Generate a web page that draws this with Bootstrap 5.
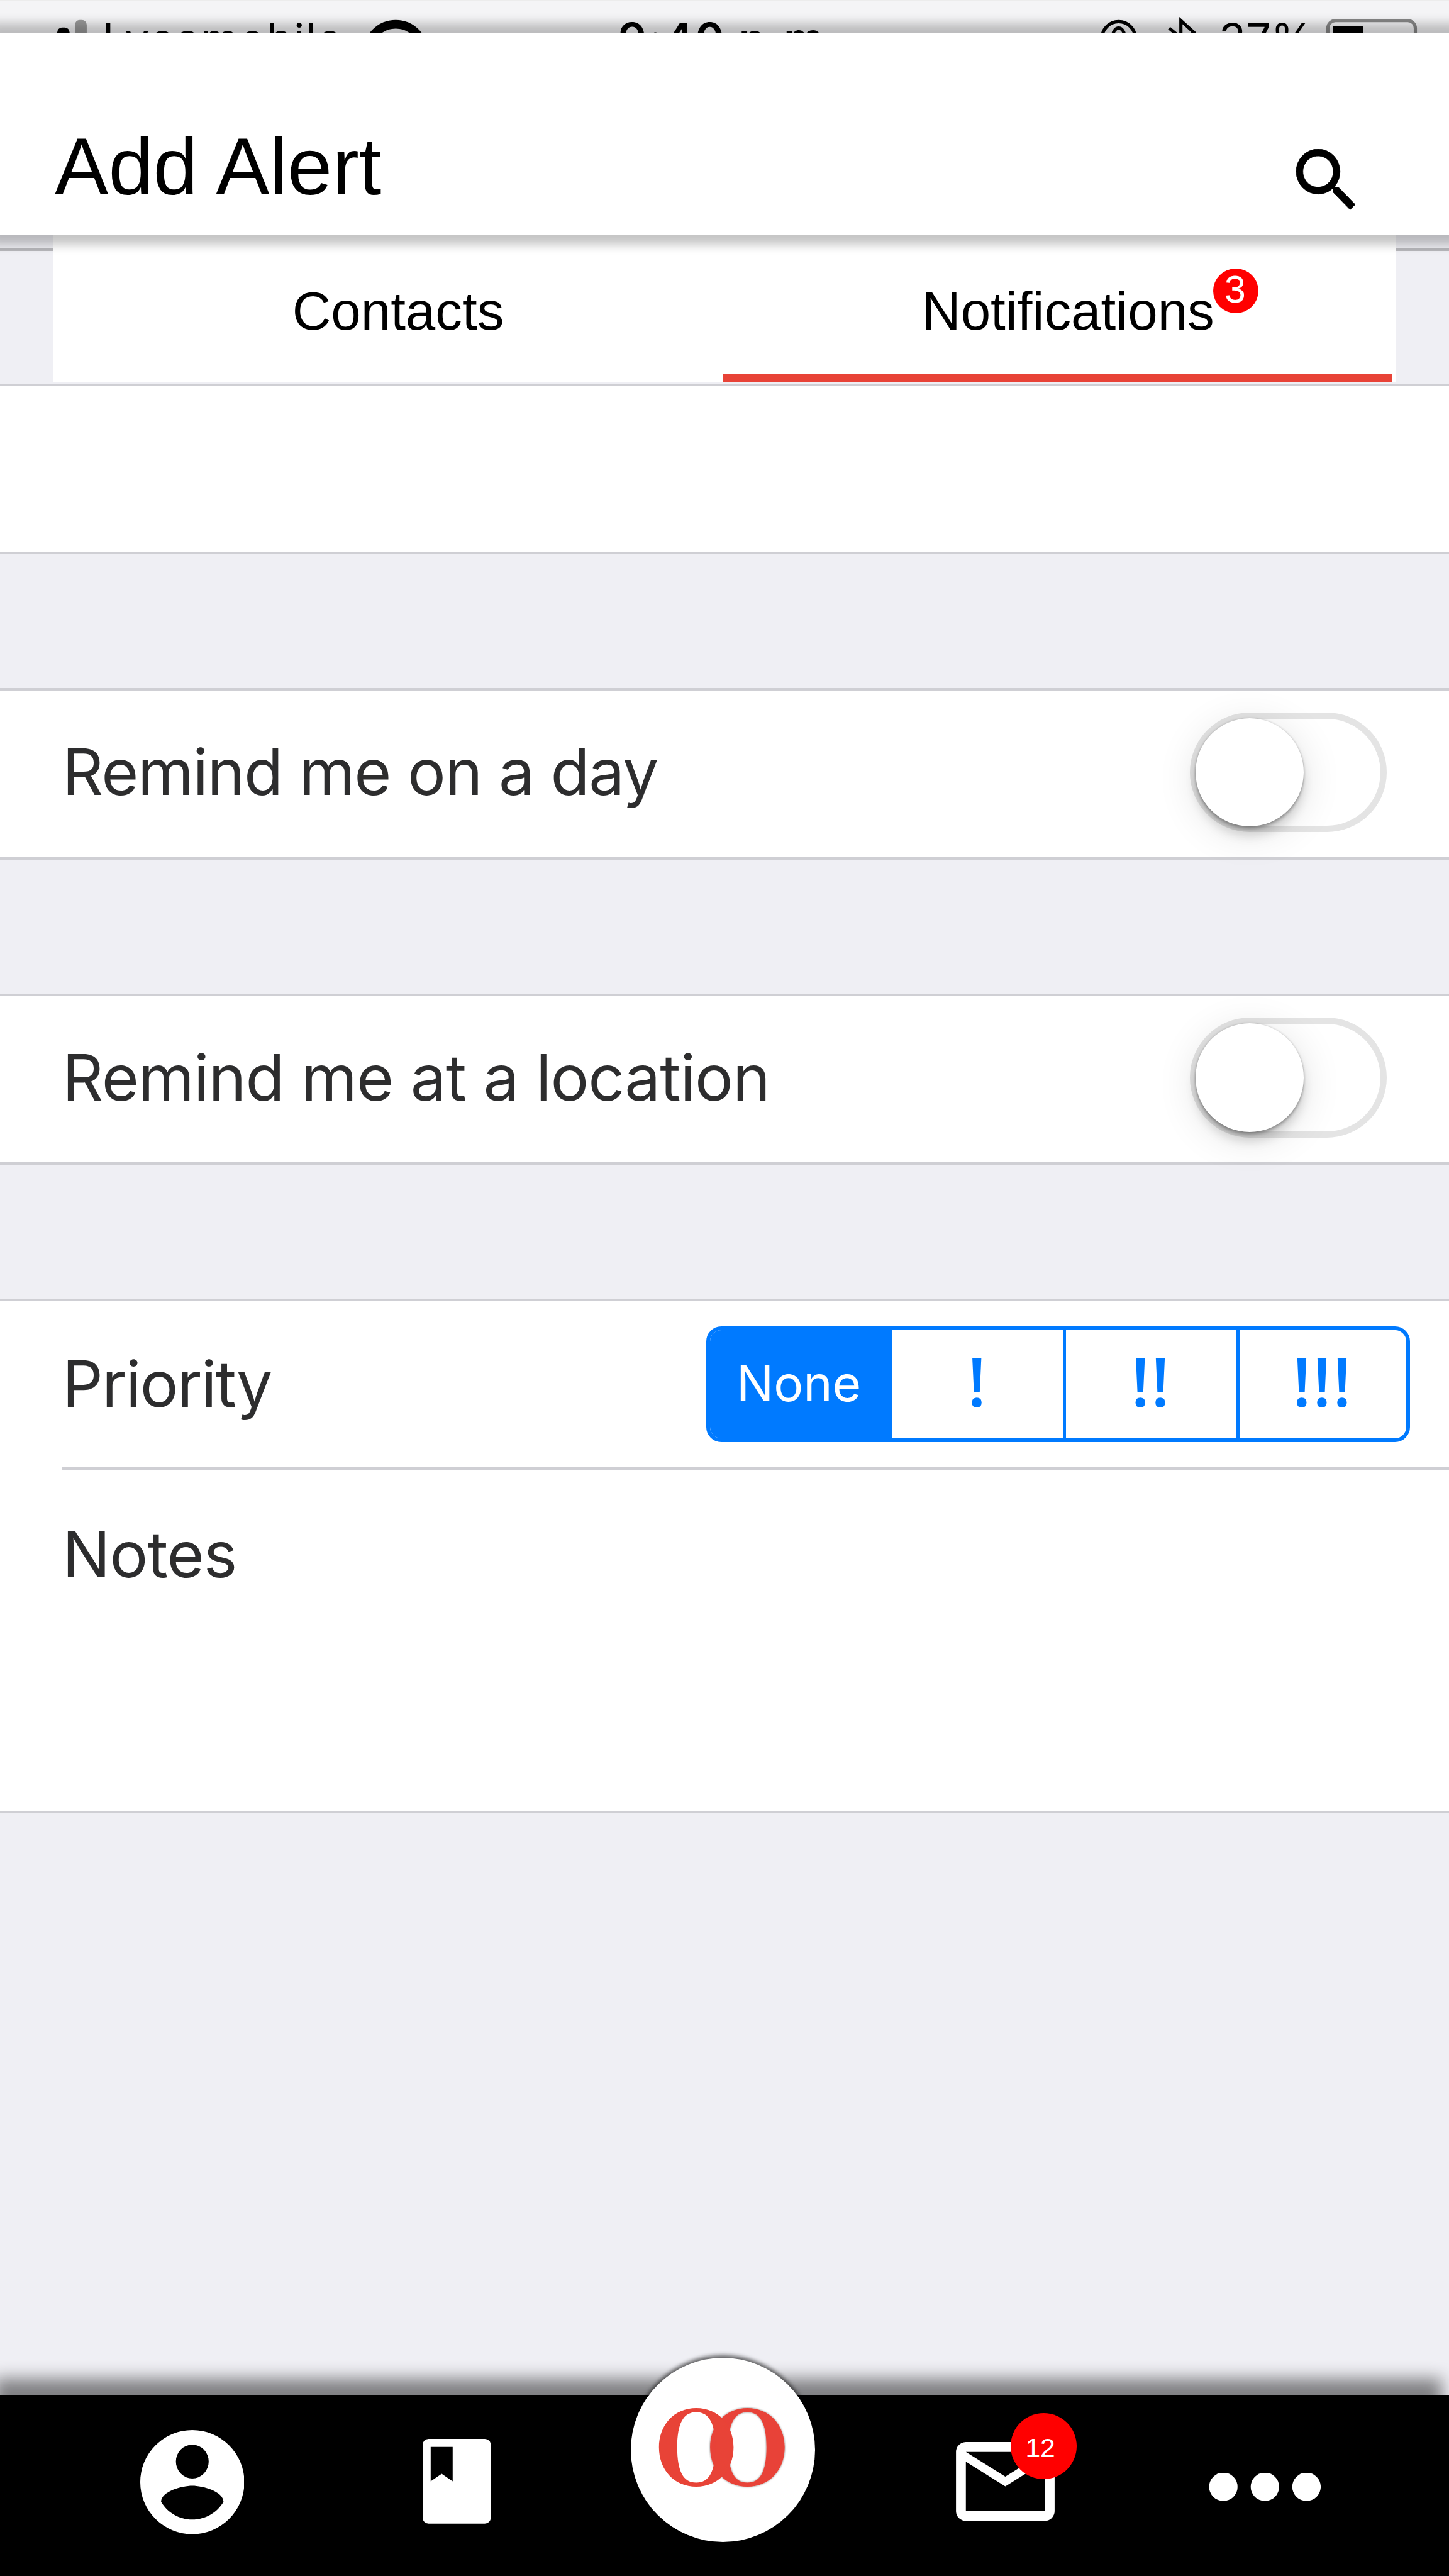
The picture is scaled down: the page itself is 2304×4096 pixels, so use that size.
<!DOCTYPE html>
<html lang="en">
<head>
<meta charset="utf-8">
<meta name="viewport" content="width=device-width, initial-scale=1">
<title>Add Alert</title>
<link href="https://cdn.jsdelivr.net/npm/bootstrap@5.3.0/dist/css/bootstrap.min.css" rel="stylesheet">
<style>
  /* 27rem spans the full width of the screen */
  html { font-size: 85.3333px; }
  body { background: #efeff4; font-family: "Liberation Sans", Arial, sans-serif; color: #000; line-height: 1; overflow: hidden; }
  svg { display: block; flex: none; }
  .screen { height: 48rem; width: 27rem; overflow: hidden; }

  .statusbar { height: .61rem; background: #f4f4f6; border-top: .03rem solid #ececec; font-family: Inter, sans-serif; flex: none; }
  .statusbar-row { height: 1.42rem; padding: 0 .55rem 0 1.07rem; }
  .ico-signal { width: .55rem; height: 1.42rem; }
  .ico-wifi { width: 1.2rem; height: 1.42rem; margin-left: -.13rem; }
  .ico-lock { width: 1.9rem; height: 1.42rem; margin-right: .33rem; }
  .ico-battery { width: 1.75rem; height: 1.42rem; margin-left: .29rem; }
  .carrier { font-size: .8rem; letter-spacing: .022rem; margin-left: .29rem; margin-right: .39rem; width: 4.6rem; white-space: nowrap; }
  .clock { font-size: .83rem; font-weight: 600; letter-spacing: .028rem; margin-left: 3.55rem; width: 3.9rem; white-space: nowrap; }
  .charge { font-size: .82rem; width: 1.7rem; white-space: nowrap; }

  .topbar { height: 3.76rem; padding: 1.74rem 1.75rem 0 1.02rem; z-index: 3; box-shadow: 0 .01rem .18rem .19rem rgba(0,0,0,.235); flex: none; }
  .topbar h1 { font-size: 1.5rem; line-height: 1; }
  .search-ico { width: 1.1rem; height: 1.13rem; margin-top: .43rem; }

  .tabstrip { height: 2.775rem; flex: none; }
  .tab-gutter { height: .305rem; width: 1rem; border-bottom: .055rem solid #b8b8bc; background: #efeff4; }
  .tabs-panel { height: 2.74rem; width: 25rem; }
  .tab-item { font-size: 1rem; padding-top: .925rem; width: 12.475rem; color: #000; text-decoration: none; border-bottom: .15rem solid transparent; }
  .tab-item.first { padding-left: 4.445rem; }
  .tab-item.second { padding-left: 3.705rem; width: 12.465rem; border-bottom-color: #e84337; }
  .count { background: #f00; color: #fff; border-radius: 50%; }
  .count-tab { width: .84rem; height: .84rem; font-size: .71rem; left: 5.43rem; top: -.235rem; padding-right: .03rem; padding-bottom: .05rem; }
  .count-mail { width: 1.23rem; height: 1.23rem; font-size: .5rem; left: 1.02rem; top: -.53rem; padding-right: .12rem; padding-top: .05rem; }

  .sheet { background: #fff; border-top: .055rem solid #cfcfd4; border-bottom: .055rem solid #cfcfd4; flex: none; font-family: Inter, sans-serif; font-size: 1.19rem; color: #2d2d2e; }
  .sheet.blank { height: 3.18rem; }
  .sheet.line { height: 3.19rem; margin-top: 2.5rem; padding: 0 1.165rem .06rem 1.16rem; }
  .sheet.details { height: 9.585rem; margin-top: 2.5rem; }
  .prio-row { height: 3.13rem; margin-left: 1.15rem; padding-right: .73rem; border-bottom: .055rem solid #cfcfd4; }
  .prio-label { margin-left: .01rem; letter-spacing: -.021rem; }
  .notes-row { padding: .99rem 0 0 1.16rem; letter-spacing: -.012rem; }
  .day-label { letter-spacing: -.0175rem; }
  .place-label { letter-spacing: -.012rem; }

  .toggle { width: 3.665rem; height: 2.23rem; border-radius: 2rem; border: .12rem solid #e4e4e4; background: #fff; }
  .knob { display: block; width: 2.02rem; height: 2.02rem; border-radius: 50%; background: #fff; margin-left: -.01rem; margin-top: -.01rem;
    box-shadow: 0 0 .04rem rgba(0,0,0,.22), 0 .05rem .05rem rgba(0,0,0,.22), 0 .17rem .2rem -.01rem rgba(0,0,0,.16), 0 .12rem .75rem rgba(0,0,0,.12); }

  .segmented { width: 13.11rem; height: 2.16rem; border: .08rem solid #007aff; border-radius: .28rem; color: #007aff; overflow: hidden; background: #fff; }
  .segmented > div { flex: none; }
  .segmented > .none { width: 3.4rem; background: #007aff; color: #fff; font-size: .92rem; padding-right: .09rem; padding-bottom: .01rem; }
  .segmented > .bang { width: 3.17rem; font-family: "Open Sans", sans-serif; font-weight: 600; font-size: 1.25rem; letter-spacing: .03rem; padding-bottom: .1rem; }
  .segmented > .split { width: 3.24rem; border-left: .07rem solid #007aff; }
  .segmented > .split:last-child { width: 3.155rem; }

  .bottombar { height: 3.38rem; background: #000; box-shadow: -.12rem -.31rem .29rem rgba(0,0,0,.47); padding-left: 2.61rem; flex: none; }
  .ico-user { width: 1.94rem; height: 1.94rem; margin-top: .66rem; }
  .ico-book { width: 1.27rem; height: 1.58rem; margin: .83rem 0 0 3.32rem; }
  .brand-btn { width: 3.44rem; height: 3.44rem; border-radius: 50%; background: #fff; margin: -.69rem 0 0 2.61rem; box-shadow: 0 -.05rem .08rem rgba(0,0,0,.6); flex: none; }
  .ico-brand { width: 3.44rem; height: 3.44rem; }
  .mail-wrap { margin: .88rem 0 0 2.62rem; width: 1.84rem; height: 1.47rem; }
  .ico-mail { width: 1.84rem; height: 1.47rem; }
  .ico-dots { width: 2.07rem; height: .52rem; margin: 1.46rem 0 0 2.89rem; }
</style>
</head>
<body>
<div class="screen d-flex flex-column">

  <div class="statusbar overflow-hidden">
    <div class="statusbar-row d-flex align-items-center">
      <svg class="ico-signal" viewBox="0 0 55 142">
        <rect x="0" y="49" width="23" height="60" rx="9"/><rect x="33" y="35" width="22" height="74" rx="9" fill="#9a9a9a"/>
      </svg>
      <span class="carrier">Lycamobile</span>
      <svg class="ico-wifi" viewBox="0 0 120 142">
        <circle cx="60" cy="96" r="53" fill="none" stroke="#000" stroke-width="16"/>
      </svg>
      <span class="clock">9:40 p.m.</span>
      <svg class="ico-lock ms-auto" viewBox="0 0 190 142">
        <g fill="none" stroke="#000" stroke-width="6"><circle cx="36" cy="69" r="31"/><path d="M25 66a11 16 0 0 1 22 0M130 50l46 38-24 18V36l24 22-46 38"/></g>
      </svg>
      <span class="charge">37%</span>
      <svg class="ico-battery" viewBox="0 0 175 142">
        <rect x="4" y="36" width="163" height="72" rx="14" fill="none" stroke="#888" stroke-width="6"/><rect x="13" y="46" width="57" height="54" rx="4"/>
      </svg>
    </div>
  </div>

  <header class="topbar bg-white position-relative d-flex align-items-start justify-content-between">
    <h1 class="m-0 fw-normal">Add Alert</h1>
    <svg class="search-ico" viewBox="3 3 17.5 17.5" preserveAspectRatio="none"><path d="M15.5 14h-.79l-.28-.27A6.47 6.47 0 0 0 16 9.5 6.5 6.5 0 1 0 9.5 16c1.61 0 3.09-.59 4.23-1.57l.27.28v.79l5 4.99L20.49 19l-4.99-5zm-6 0C7.01 14 5 11.99 5 9.5S7.01 5 9.5 5 14 7.01 14 9.5 11.99 14 9.5 14z" stroke="#000" stroke-width=".15"/></svg>
  </header>

  <nav class="tabstrip d-flex">
    <div class="tab-gutter"></div>
    <div class="tabs-panel bg-white d-flex">
      <a class="tab-item first">Contacts</a>
      <a class="tab-item second"><span class="position-relative">Notifications<span class="count count-tab position-absolute d-flex align-items-center justify-content-center">3</span></span></a>
    </div>
    <div class="tab-gutter"></div>
  </nav>

  <main class="flex-grow-1 d-flex flex-column">
    <section class="sheet blank"></section>
    <section class="sheet line d-flex align-items-center justify-content-between">
      <span class="day-label">Remind me on a day</span>
      <div class="toggle"><span class="knob"></span></div>
    </section>
    <section class="sheet line d-flex align-items-center justify-content-between">
      <span class="place-label">Remind me at a location</span>
      <div class="toggle"><span class="knob"></span></div>
    </section>
    <section class="sheet details">
      <div class="prio-row d-flex align-items-center justify-content-between">
        <span class="prio-label">Priority</span>
        <div class="segmented d-flex text-center">
          <div class="none d-flex align-items-center justify-content-center">None</div>
          <div class="bang d-flex align-items-center justify-content-center">!</div>
          <div class="bang split d-flex align-items-center justify-content-center">!!</div>
          <div class="bang split d-flex align-items-center justify-content-center">!!!</div>
        </div>
      </div>
      <div class="notes-row">Notes</div>
    </section>
  </main>

  <footer class="bottombar d-flex align-items-start">
    <svg class="ico-user" viewBox="2 2 20 20" fill="#fff"><path fill-rule="evenodd" d="M12 2a10 10 0 1 0 0 20 10 10 0 0 0 0-20zm0 2.800a3.150 3.250 0 1 1 0 6.500A3.150 3.250 0 0 1 12 4.800zm0 14.400c-2.500 0-4.710-1.280-6-3.420.03-1.990 4-3.080 6-3.080s5.970 1.090 6 3.080c-1.290 2.140-3.500 3.420-6 3.420z"/></svg>
    <svg class="ico-book" viewBox="0 0 127 158"><rect width="127" height="158" rx="11" fill="#fff"/><path d="M15 15h41v64L35.500 65 15 79z"/></svg>
    <div class="brand-btn">
      <svg class="ico-brand" viewBox="0 0 344 344">
        <defs>
          <path id="ring" fill-rule="evenodd" d="M-69.500 0C-69.500-42-41-73.300 0-73.300S69.500-42 69.500 0 41 73.300 0 73.300-69.500 42-69.500 0zM-35.500 0C-35.500 45-24 65.700 0 65.700S35.500 45 35.500 0 24-65.700 0-65.700-35.500-45-35.500 0z"/>
          <filter id="soft" x="-20%" y="-20%" width="140%" height="140%"><feDropShadow dx="0" dy="0" stdDeviation="1.8" flood-color="#000" flood-opacity=".55"/></filter>
        </defs>
        <g fill="#e84337"><use href="#ring" x="217.300" y="167" filter="url(#soft)"/><use href="#ring" x="122" y="167"/></g>
      </svg>
    </div>
    <div class="mail-wrap position-relative">
      <svg class="ico-mail" viewBox="2 4 20 16" fill="#fff"><path d="M20 4H4c-1.100 0-2 .9-2 2v12c0 1.100.9 2 2 2h16c1.100 0 2-.9 2-2V6c0-1.100-.9-2-2-2zm0 14H4V8l8 5 8-5v10zm-8-7L4 6h16l-8 5z"/></svg>
      <span class="count count-mail position-absolute d-flex align-items-center justify-content-center">12</span>
    </div>
    <svg class="ico-dots" viewBox="0 0 207 52" fill="#fff"><circle cx="26" cy="26" r="26.500"/><circle cx="103.500" cy="26" r="26.500"/><circle cx="181" cy="26" r="26.500"/></svg>
  </footer>
</div>
<script src="https://cdn.jsdelivr.net/npm/bootstrap@5.3.0/dist/js/bootstrap.bundle.min.js"></script>
</body>
</html>
